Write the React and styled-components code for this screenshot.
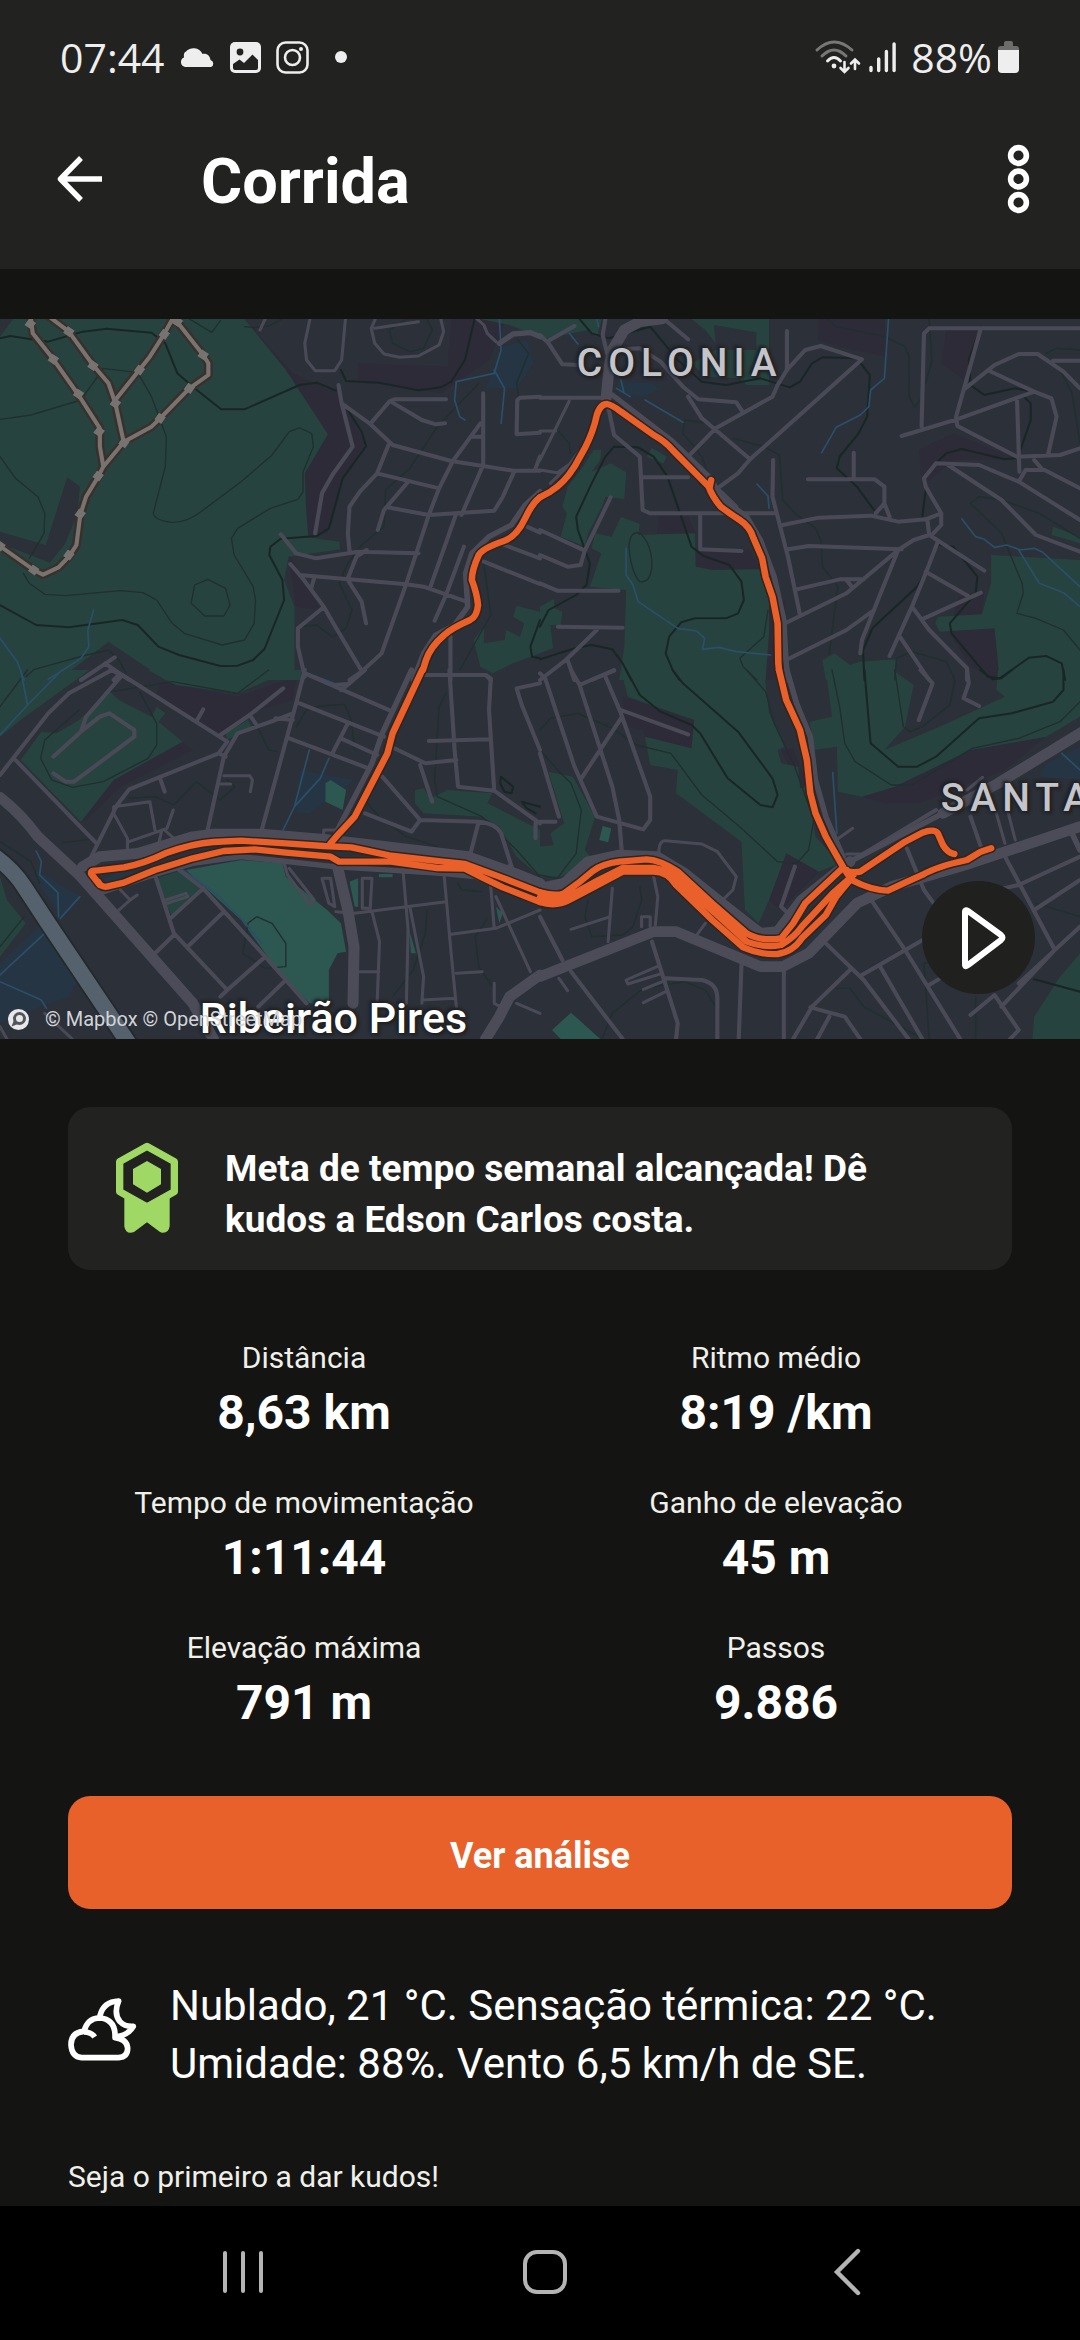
import React from "react";
import styled, { createGlobalStyle } from "styled-components";

const color = {
  page: "#141412",
  surface: "#222220",
  text: "#ffffff",
  muted: "#f0f0ea",
  status: "#eeeeee",
  accent: "#e8602a",
  goal: "#9fd865",
  nav: "#b4b4b4",
};

const GlobalStyle = createGlobalStyle`
  *, *::before, *::after { box-sizing: border-box; }
  body { margin: 0; background: ${color.page}; }
`;

const Screen = styled.div`
  display: flex;
  flex-direction: column;
  min-height: 100vh;
  overflow-x: hidden;
  background: ${color.page};
  color: ${color.text};
  font-family: Roboto, "Liberation Sans", sans-serif;
`;

const Header = styled.header`
  background: ${color.surface};
  padding-bottom: 25px;
`;

const StatusBar = styled.div`
  display: flex;
  align-items: center;
  justify-content: space-between;
  height: 114px;
  padding: 0 60px;
  color: ${color.status};
  font: 400 41px/48px "Open Sans", "Noto Sans", sans-serif;
`;

const StatusGroup = styled.div`
  display: flex;
  align-items: center;
  gap: ${(p) => p.$gap};
`;

const AppBar = styled.div`
  display: flex;
  align-items: center;
  height: 130px;
  padding: 0 50px 0 56px;
`;

const Title = styled.h1`
  flex: 1;
  margin: 0;
  padding: 6px 0 0 98px;
  font-size: 63px;
  line-height: 72px;
  font-weight: 700;
`;

const IconButton = styled.button`
  display: flex;
  align-items: center;
  justify-content: center;
  padding: 0;
  border: 0;
  background: none;
  color: inherit;
  cursor: pointer;
`;

const Icon = styled.svg`
  display: block;
  flex: none;
  overflow: visible;
`;

const Main = styled.main`
  flex: 1;
  padding-top: 50px;
`;

const MapFrame = styled.section`
  position: relative;
  aspect-ratio: 3 / 2;
  overflow: hidden;
  background: #2b3039;
`;

const MapDrawing = styled.svg`
  display: block;
  width: 100%;
  height: 100%;
`;

const MapLabel = styled.span`
  position: absolute;
  left: ${(p) => p.$x}%;
  top: ${(p) => p.$y}%;
  white-space: nowrap;
  color: ${(p) => (p.$town ? "#ffffff" : "#c4c5ca")};
  font-size: ${(p) => (p.$town ? 43 : 39)}px;
  line-height: 48px;
  font-weight: 500;
  letter-spacing: ${(p) => (p.$town ? "normal" : "6px")};
  text-shadow: 0 0 3px #222, 0 0 4px #222, 2px 2px 3px #222, -2px -2px 3px #222;
`;

const Attribution = styled.div`
  position: absolute;
  left: 7px;
  bottom: 6px;
  display: flex;
  align-items: center;
  gap: 15px;
  color: #d2d4d7;
  font-size: 20px;
  line-height: 28px;
`;

const PlayButton = styled(IconButton)`
  position: absolute;
  right: 45px;
  bottom: 45px;
  width: 113px;
  height: 113px;
  border-radius: 50%;
  background: #20201e;
`;

const Content = styled.div`
  display: flex;
  flex-direction: column;
  padding: 68px 68px 0;
`;

const GoalCard = styled.section`
  display: flex;
  align-items: center;
  gap: 46px;
  padding: 30px 47px 31px;
  border-radius: 22px;
  background: ${color.surface};
`;

const GoalText = styled.p`
  flex: 1;
  margin: 0;
  padding-top: 6px;
  margin-bottom: -6px;
  max-width: 680px;
  font-size: 37px;
  line-height: 51px;
  font-weight: 700;
`;

const Stats = styled.dl`
  display: grid;
  grid-template-columns: 1fr 1fr;
  row-gap: 41px;
  margin: 0;
  padding: 68px 0 64px;
  text-align: center;
`;

const StatLabel = styled.dt`
  color: ${color.muted};
  font-size: 30px;
  line-height: 40px;
`;

const StatValue = styled.dd`
  margin: 0;
  padding-top: 6px;
  font-size: 48px;
  line-height: 58px;
  font-weight: 700;
`;

const PrimaryButton = styled.button`
  width: 100%;
  height: 113px;
  border: 0;
  border-radius: 22px;
  background: ${color.accent};
  color: ${color.text};
  font: inherit;
  font-size: 36px;
  line-height: 48px;
  font-weight: 700;
  padding: 6px 0 0;
  cursor: pointer;
`;

const Weather = styled.section`
  display: flex;
  align-items: flex-start;
  gap: 32px;
  padding-top: 68px;
`;

const WeatherIcon = styled(Icon)`
  margin-top: 20px;
`;

const WeatherText = styled.p`
  flex: 1;
  margin: 0;
  max-width: 780px;
  font-size: 42px;
  line-height: 58px;
`;

const Kudos = styled.p`
  margin: 0;
  padding: 64px 0 9px;
  color: ${color.muted};
  font-size: 30px;
  line-height: 40px;
`;

const NavBar = styled.nav`
  display: grid;
  grid-template-columns: repeat(3, 1fr);
  height: 135px;
  padding: 0 82px 4px 92px;
  background: #000000;
  color: ${color.nav};
`;

/* The map is drawn in four tiles; each layer is painted over all tiles before the next. */
const tiles = [
  {
    origin: "translate(0 -19)",
    park:
      "M0 110 L38 57 H710 L830 210 L952 403 L885 520 L888 620 L895 712 L985 725 L988 748 L838 770 L825 840 L855 920 V1140 H480 L315 1025 L170 1140 H0 V730 L145 788 L190 730 L225 640 L232 560 L195 532 L133 735 L0 695Z" +
      "M1500 917 L1568 935 V1060 L1490 1090 L1430 1120 L1395 1100 L1375 1020 L1405 980 V1030 L1465 1020 L1470 990 L1510 1010 L1522 970 L1490 950Z M1395 57 H1568 V110 L1480 75Z",
    shade:
      "M710 57 L850 220 L980 280 L1060 430 L990 540 L950 700 L895 705 L885 520 L952 403 L830 210Z M1310 57 H1470 L1420 180 L1280 280 L1040 240 V190 L1300 200Z M838 770 L860 920 L930 930 L850 780Z",
    lake: "M1460 140 L1530 120 L1550 190 L1500 265 H1410Z",
    ridge:
      "M0 115 L30 108 L140 125 L240 95 L310 86 L440 98 L480 130 L515 220 L565 265 L642 328 H710 L870 255 L920 248 L975 272 M0 915 L105 975 L200 982 L355 960 L400 975 L460 1040 L520 1065 L640 1098 L690 1097 L735 1080 L768 1047 L825 900 L820 840 L782 765 L785 740 L815 716 L920 708 L955 685 L995 535 L1063 438 L1050 395 L1010 330 M1378 57 L1350 180 L1310 245 L1280 262 L1215 271 L1100 248 L1005 243 L990 210 M1568 960 L1540 1040 L1545 1070 L1568 1075",
    contour:
      "M0 358 L90 345 L235 300 L300 205 L400 218 L440 290 L483 410 L480 500 L445 640 Q450 662 500 667 Q545 668 590 630 L700 545 L790 465 L840 395 L870 384 L905 400 L910 440 L880 515 V575 L865 598 L785 625 L690 685 L672 715 L680 765 L735 860 L742 900 L738 970 L710 1020 L645 1035 L535 1000 L500 970 L455 900 L415 878 L350 872 L190 887 L130 883 L85 850 L68 820 M0 470 L45 535 L110 590 L130 640 L128 700 L85 775 M603 838 L655 865 L668 915 L650 948 H595 L555 910 L565 855Z M75 1130 L100 1108 L240 1068 L315 1050 L345 1080 L365 1118 M1390 250 L1270 380 L1190 505 L1120 570 L1115 680 L1050 735 L1010 790 L985 850 L1022 930 L1005 985 L965 1012 L920 975 L870 980 M1130 90 L1180 57 H1240 L1255 90 L1230 145 L1190 155 L1140 130Z M1500 115 L1535 160 L1500 250 L1505 290 M1405 790 L1425 945 L1335 1110 M550 57 L615 97 L640 62 M710 80 L740 83 L780 78 L820 57",
    river:
      "M1450 57 L1455 150 L1435 220 L1325 245 L1320 300 L1335 350 L1350 360 M1435 210 L1465 265 L1460 320 L1455 370 M272 930 L255 990 L258 1040 L235 1075 L140 1138 M0 1015 L50 1085 L70 1140",
    street:
      "M983 255 L992 310 L1024 440 L965 525 L935 580 L915 700 M992 310 L1075 372 L1140 435 L1310 483 L1490 512 H1568 M1075 372 L1130 305 L1145 298 H1295 M1135 305 L1225 360 L1265 373 L1292 370 M1128 435 L1095 520 L1045 575 L1015 620 L1010 700 L1015 755 M1095 520 L1275 565 M1185 545 L1115 630 L1097 690 M1125 622 L1245 645 L1435 632 L1460 590 L1493 515 M1403 280 V495 L1340 645 M1395 370 L1315 483 L1275 565 L1245 645 L1180 850 L1108 1060 L1050 1115 L1015 1140 M1370 410 H1395 M1325 640 L1250 860 M1568 290 L1510 293 L1502 300 L1500 403 L1568 398 M1568 470 L1555 505 M815 703 L860 760 L918 775 L1040 755 L1215 760 M1065 750 L1035 770 L1010 835 M843 792 L875 830 L940 920 L985 1000 L1050 1112 M870 825 L1180 853 L1230 860 L1355 905 M912 835 L903 868 M1010 840 L1050 905 L1063 970 M940 922 L865 985 V1040 L885 1130 M1347 740 L1295 885 L1262 962 M1530 680 L1568 698 M1465 735 L1568 775 M1405 785 L1568 852 M1308 1010 V1140 M1225 1125 H1410 L1425 1140 M235 1140 L333 1072 M305 1090 L375 1140 M345 1125 L330 1140",
    lane:
      "M900 57 L885 130 L890 180 L915 212 H972 L992 180 L1003 57 M1090 57 L1078 85 L1088 130 L1115 162 L1160 172 L1215 168 L1275 135 L1288 95 L1280 57 M1088 85 L1215 65 M770 57 L755 90 M1385 57 L1405 75 L1415 100 L1440 125",
    avenue:
      "M1568 575 L1525 615 L1485 675 L1420 710 L1370 760 L1352 820 L1358 920 L1320 975 L1265 1005 L1230 1060 L1200 1140 M1450 130 L1490 102 L1540 98 L1568 110",
    route:
      "M1568 592 Q1545 610 1525 655 Q1500 710 1465 722 Q1400 745 1390 765 Q1370 810 1370 840 Q1385 880 1388 915 Q1385 950 1365 960 Q1310 985 1290 1005 Q1250 1040 1237 1080 L1228 1110",
  },
  {
    origin: "translate(540 -19)",
    park:
      "M0 57 H180 L165 110 L140 90 L0 120Z M440 57 H665 V255 H600 L580 235 L480 230 L440 190 L510 150 H628 V97 L505 75 L510 130 L480 90Z M310 470 L325 443 L368 470 L358 490Z M155 450 H178 L175 480 L150 515 L205 490 L250 517 L245 597 L190 590 L180 620 L140 700 L130 740 L85 720 L60 710 L78 640 L65 620 L80 560 L125 500Z M235 650 L290 672 L285 705 L450 700 L452 800 L500 810 L640 808 L665 880 V1000 L655 1140 H230 L245 1040 L250 870 L145 860 L178 760 L150 745 L160 700 L208 710Z M0 920 L40 897 L42 925 L65 935 L60 975 H30 L38 1045 L0 1060Z M1310 765 L1568 780 V1140 H1335 L1320 985 L1160 995 L1148 970 L1155 950 L1283 943 L1310 850Z M1490 680 L1568 710 V730 L1485 705Z M820 1080 L855 1060 L900 1095 L930 1085 L1035 1078 L1030 1140 H830Z",
    shade:
      "M808 57 H1000 L1005 170 L870 140 L808 120Z M345 650 H430 L452 700 H340Z M452 745 L610 750 L640 808 H500 L452 800Z M1100 450 L1200 400 L1390 480 H1200 L1110 560Z M1180 85 L1270 90 L1230 240 L1165 190Z M1215 890 L1290 870 L1283 943 L1320 985 L1335 1140 L1250 1100 L1190 1000Z M665 900 L710 900 L715 1140 H655Z",
    lake: "M225 245 L330 250 L345 270 L300 290 L230 280Z",
    ridge:
      "M0 980 L25 930 L105 885 L135 855 L145 790 L110 690 L105 650 L150 550 L190 470 L215 440 L285 442 L330 470 L370 530 L440 740 L475 768 L550 795 L585 845 L592 900 L575 940 L540 955 H450 L410 967 L375 1010 L365 1060 L385 1110 L405 1140 M115 57 L150 100 L200 115 L320 80 L400 180 L470 245 L540 255 L640 235 L725 262 L755 245 L790 190 L820 172 L920 175 L958 225 L950 350 L925 400 L870 470 L862 505 L920 560 L970 630 M0 1078 L100 1045 L150 1035 L210 1048 L240 1090 L265 1140 M1110 650 L1120 570 M1150 490 L1180 460 L1225 447 L1350 478 L1380 475 M1395 450 L1425 360 V310 L1405 290 M1430 275 L1380 265 L1290 285 L1250 255 L1245 180 L1280 80 M1160 735 L1200 740 L1270 830 L1265 880 L1190 970 L1195 1000 L1300 1130 L1335 1135 L1420 1073 L1470 1068 L1515 1090 L1525 1140 M1120 820 L1095 860 L965 985 L938 1050 L942 1140",
    contour:
      "M835 57 L860 80 L1000 110 L1060 140 L1072 170 V290 L1088 322 L1110 290 M1130 57 L1138 180 L1120 250 M490 370 L420 360 L415 400 L470 470 L490 530 M560 415 L650 440 L695 465 L705 600 L740 640 L800 685 L815 720 L820 800 L865 860 L840 1060 M258 740 Q262 690 290 700 Q325 730 325 800 Q320 850 290 845 Q265 820 258 740Z M662 930 L650 1010 L580 1075 L590 1100 L630 1140 M1568 715 L1450 640 L1340 600 L1275 590 L1250 610 L1340 700 L1400 850 L1403 880 L1385 940 L1440 955 L1520 990 L1568 1050 M1470 160 L1500 145 L1568 150 M1510 210 L1545 280 L1568 430 M1030 1140 L1035 1075 L1080 1055 L1180 1085 L1205 1140 M55 395 L85 430 L88 460",
    river:
      "M1012 57 L1000 235 L960 270 L955 320 L930 345 L860 382 L818 458 M305 300 L415 367 M85 100 L110 132 M165 57 L170 80 M235 240 L243 275 M222 265 L262 290 M630 552 L662 588 L665 625 M250 745 V825 L270 855 L285 905 L400 985 L455 993 L478 1015 L472 1048 L520 1042 L570 1055 L670 1065 M1225 657 L1265 710 L1290 718 L1320 742 L1355 735 L1395 750 L1435 745 L1460 757 L1568 860 M1390 750 L1450 850 L1520 878 L1568 920",
    street:
      "M0 293 H180 M190 57 L182 105 L195 160 M205 150 L290 145 L350 185 L415 260 L460 298 L570 307 L590 338 M360 57 L430 118 M20 125 L100 78 M0 105 L25 130 L65 193 L120 195 M717 93 V210 L690 255 L675 290 L510 385 L430 470 M430 290 L470 355 L610 478 M570 620 L515 565 L575 520 L610 478 L935 178 L815 138 L770 150 L715 212 M200 330 L215 405 L290 470 L298 630 L320 640 H680 M298 532 H430 M465 640 V748 L585 753 M677 480 L675 590 L700 690 L720 770 L755 945 M705 675 L810 653 L960 647 L1040 665 L1120 658 L1165 640 L1120 560 L1115 535 L1150 490 L1275 495 L1390 545 L1568 660 M778 538 H972 L1000 560 V610 L975 640 M1000 610 L1015 650 M911 458 V530 M720 748 L780 738 L1050 748 M745 868 L870 838 H940 M715 968 L890 880 L1040 750 L1085 720 L1130 705 L1125 660 M890 840 L905 860 M1165 640 V675 L1135 708 L1290 812 M715 1080 L890 990 L970 930 M1040 750 L985 890 L935 1020 L930 1060 M1155 725 L1120 820 L1080 920 L1015 1068 M1120 815 L1243 888 M1280 878 L1115 955 M1080 920 L1130 990 L1240 1105 V1140 M1045 1010 L1130 1140 M1108 380 L1115 100 L1130 85 H1568 M1280 85 L1230 270 L1208 350 L1212 378 L1385 470 L1510 465 L1568 445 M1050 408 L1210 358 L1435 275 M1235 265 L1320 195 L1390 162 H1445 L1520 215 L1568 265 M1490 182 H1568 M1305 213 L1435 275 L1485 295 L1500 350 L1475 465 M1385 295 L1392 515 M1390 545 L1410 510 H1465 L1568 565 M1435 480 L1460 510 M1185 495 L1340 600 L1440 705 L1568 755 M0 690 L130 752 L205 592 M130 752 L118 795 L80 800 L0 765 M0 850 L50 872 H228 M52 980 L240 983 M165 990 L75 1080 L0 1140 M80 1080 L100 1140 M215 1112 L150 1140",
    lane: "M0 510 L50 518 L90 490 M85 303 L0 480 M0 393 H45 M175 320 L140 420 L80 500 L30 550",
    avenue:
      "M210 285 L380 420 L500 540 L520 590 L600 650 L640 720 L680 830 L708 960 L714 1080 L720 1140",
    trunk: "M355 57 L290 65 L245 90 L210 150 L200 210 L192 295",
    route:
      "M497 540 L492 565 M0 592 L30 575 Q70 550 100 500 L130 445 Q155 395 165 345 Q175 312 195 312 Q210 315 235 335 L330 405 Q365 425 385 450 L490 560 Q500 590 525 620 Q550 640 580 660 Q610 680 620 715 L645 775 L655 830 L675 890 L690 970 L692 1090 L694 1110",
  },
  {
    origin: "translate(0 351)",
    park:
      "M0 0 H260 L140 90 L60 150 L0 200Z M430 0 H875 V30 H780 L690 70 L510 45Z M320 65 L345 90 L440 140 L455 110 L480 130 L460 155 L530 215 L330 330 L235 455 L60 270 L120 185 L165 190 L230 150Z M655 190 L720 150 L730 170 L660 210Z M455 625 L530 600 L590 655 L500 740 L475 690Z M0 620 L20 690 L75 760 L0 860Z M1205 360 L1230 355 L1250 385 L1300 360 L1430 370 L1415 400 L1568 480 V620 L1500 560 L1450 470 L1400 440 L1230 430 L1205 400Z",
    garden:
      "M945 340 L960 330 L1005 360 L995 420 L945 395Z M540 600 L700 570 L820 580 L830 620 L950 720 L990 760 L1005 845 L980 850 L955 900 V1005 L900 1000 L820 920 L700 750Z M1015 635 L1040 625 V710 H1030Z M1188 780 L1208 850 H1193Z M1100 612 H1140 V622 H1100Z M1440 710 L1460 730 L1450 760Z",
    shade:
      "M470 35 L690 80 L830 30 H860 L850 90 L720 130 L640 190 L450 80Z M530 215 L560 240 L350 350 L250 450 L235 455 L330 330Z",
    lake:
      "M105 600 L235 680 L180 745 L110 640Z M0 880 L110 770 L160 780 L240 900 L200 980 L130 1005 L0 1060Z M870 300 L1030 330 L900 430 H860Z M300 625 L340 605 H400 L310 640Z",
    contour:
      "M0 110 L80 0 M325 65 L500 35 L690 70 L780 0 M405 65 L455 160 V225 L430 265 L300 335 L210 352 L150 330 L118 265 L130 210 L230 120 M375 385 L450 380 L505 405 L570 335 L640 390 L682 350 L660 330 M180 518 L260 508 M860 170 L890 120 L930 108 L1000 103 L1020 150 L1030 240 M1060 390 L1100 440 L1180 500 L1270 530 M745 165 L780 240 L805 245 M1295 70 L1275 110 L1262 330 L1270 380 L1400 440 L1500 540 L1568 620 M705 850 L720 760 L745 740 L790 760 L830 820 V890 L770 895 L705 850 M1240 720 L1235 790 L1200 900 L1140 980 M1415 745 L1380 800 L1390 890 L1430 950 M1330 640 L1340 660 L1400 665 M0 515 L90 575 L115 640 M0 830 L70 740",
    ridge: "M1455 320 L1490 350 L1485 370 L1465 365 L1452 340Z M1568 410 L1515 395 L1530 415 L1555 430",
    river:
      "M60 0 L80 105 L0 195 M80 105 L180 0 M105 543 L120 575 L115 615 L168 668 L170 740 M232 680 L175 745 M0 935 L120 990 L135 1015 M898 240 L855 410 L822 480 M955 265 L930 325 L855 410 M0 915 L130 790 M890 8 L970 40 M530 600 L620 665 L705 750 L760 820",
    street:
      "M325 0 L200 70 L140 130 L0 315 M355 15 L250 140 L235 185 L155 260 M235 185 L290 140 L318 130 L390 180 V200 L215 335 H190 L155 310 M320 0 L355 15 L660 215 L635 250 M590 118 L570 155 M640 195 L725 135 L822 55 M725 135 L745 165 M600 490 L605 470 L650 260 L690 190 L800 150 L850 130 M800 145 L850 150 M655 260 L635 250 L375 358 L340 405 L260 570 M465 325 L478 365 M45 270 L280 520 M885 0 L860 100 L760 480 M885 10 L1140 125 M870 100 L1115 200 M840 205 L1070 295 M1010 160 L965 250 M990 205 L1095 255 M1060 0 L1015 40 L990 60 M970 45 L1010 42 M1060 430 L1195 485 L1220 450 L1390 455 Q1440 460 1455 490 L1490 605 M1110 320 L1220 450 M1145 235 L1235 280 L1325 270 M1220 285 L1255 395 M1390 455 L1365 555 M1305 0 L1320 240 L1330 350 L1435 362 L1568 460 M1225 15 H1410 L1425 25 L1420 120 L1435 362 M1245 213 L1425 208 M1568 40 L1500 55 L1515 105 L1568 240 M1555 460 V505 M450 615 L505 790 L660 960 L640 980 M520 600 L590 655 L770 860 L890 1000 M590 655 L495 745 M650 725 L550 825 M505 795 L445 855 M770 860 L660 960 M825 935 L750 1010",
    lane:
      "M330 430 L330 410 L435 395 L450 480 M330 430 L370 505 V545 M375 515 L485 475 L503 420 M470 480 L460 525 M478 480 L510 510 M650 317 H725 L733 330 L727 365 M640 342 H670 M482 690 L540 670 L545 680 L485 700 M350 660 L378 690 L340 725 M378 690 L398 675 M825 580 L835 615 L900 705 L912 690 L840 595 M975 725 L1030 730 L1295 695 M935 625 H960 L972 710 L955 700Z M1052 625 H1080 L1075 715 H1052Z M1080 725 L1102 815 L1095 1000 M1040 905 H1100 M1170 600 L1185 780 L1180 1000 M1190 710 L1230 920 L1225 1000 M1290 620 L1310 850 L1325 1010 M1310 793 L1440 775 L1568 720 M1325 910 L1400 905 M1425 650 L1435 775 M1440 680 L1540 905 M1225 990 L1320 985 M1500 1000 L1568 1030 M1435 940 V1000 L1470 1020 M940 500 V480 H975 M130 1030 L210 1107 M0 1070 L20 1107",
    avenue:
      "M1195 0 L1110 190 L1080 280 L1020 400 L975 490 M300 665 L460 610 L560 580 L700 560 L970 590 L1280 610 L1380 620 L1568 702 M1480 590 L1460 600",
    trunk:
      "M0 382 Q60 430 110 500 L235 620 L560 1000 L620 1107 M240 590 L290 560 L400 550 L560 500 L620 492 H760 L940 508 L1120 530 L1360 560 L1500 612 L1568 640 M980 590 L1010 720 L1028 830 L1025 1000 M1568 915 L1480 980 L1450 1040 L1410 1107",
    highway: "M-20 555 Q40 600 70 650 L140 760 L380 1130",
    route:
      "M1226 0 L1190 80 L1140 190 L1125 250 L1090 320 L1030 440 L985 490 L960 520 M290 645 L265 612 Q262 600 280 602 L360 592 Q420 580 480 550 Q560 520 620 516 L700 512 L830 520 L940 528 L1020 532 L1130 556 L1280 574 L1350 582 L1450 620 L1568 667 M285 635 Q292 652 310 650 L360 638 L450 600 L560 565 L650 543 L740 538 L830 548 L960 560 L985 575 L1130 574 L1270 594 L1350 596 L1400 622 L1460 652 L1568 696",
  },
  {
    origin: "translate(540 351)",
    park:
      "M235 0 H650 L665 130 L710 230 L690 240 L700 280 L750 290 L755 355 L775 350 L800 500 L870 580 L810 605 L715 550 L665 690 L635 760 L595 720 L585 515 L395 370 L400 300 L320 285 L305 200 L440 235 L448 150 L255 80Z M830 0 H1025 L1085 45 L1060 170 L1000 240 L1160 170 L1350 80 L1325 60 L1330 0 H1568 V140 L1470 200 L1250 240 L1030 350 L935 380 L865 365 L862 230 L795 240 L783 155 L848 140Z M25 305 L95 320 L160 440 L130 540 L155 570 L60 620 H0 V530 L40 525 L30 490 L70 460Z M1568 850 V1107 H1430 L1435 1040 L1510 920Z",
    garden: "M182 468 L207 475 L198 517 L172 510Z M90 1028 L175 1107 H60 L35 1080Z",
    shade:
      "M240 80 L448 150 L440 235 L305 200 L300 180 L250 170Z M700 240 L735 235 L775 340 L755 355Z M665 690 L715 550 L810 605 L700 720Z M935 380 L1030 350 L1250 240 L1470 200 L1350 300 L1100 400 H1000Z",
    lake: "M1470 280 L1568 230 V330 L1450 320Z",
    ridge:
      "M250 0 L290 75 L350 125 L440 165 L465 190 L545 325 L640 405 L675 412 L690 375 L675 325 L575 185 L415 40 L385 0 M942 0 L960 220 L1040 290 H1095 L1150 260 L1275 145 L1370 130 L1490 95 L1520 60 V0 M1278 0 L1315 28 L1340 25 L1370 0 M1435 928 L1568 965",
    contour:
      "M600 0 L655 65 L680 160 L740 290 L795 450 L780 540 L745 580 L690 575 L580 470 L470 375 L380 250 L280 225 L210 175 L110 130 L30 145 L0 180 M0 240 L60 310 L90 340 L120 420 L105 550 L50 625 L0 615 M848 0 L870 110 L885 220 L915 275 L1020 345 H1080 L1255 235 L1390 205 L1510 155 L1568 95 M1030 0 L1055 170 L1075 185 L1110 170 L1190 105 L1205 30 M290 650 L295 690 L270 770 L240 795 L150 800 L130 740 L140 690 M180 1107 L210 1030 L300 955 L420 935 L480 960 L510 1010 M860 955 H900 L940 1010 L1100 1100 M1130 1107 L1115 880 L1200 860 M1265 980 V1107 M1440 700 L1568 740",
    river: "M850 308 L862 490 M1515 250 L1568 300",
    street:
      "M0 10 L15 25 L100 290 L165 440 L300 478 L320 450 V380 L235 130 L190 20 M90 0 L115 45 L210 350 L230 450 L238 550 M115 45 L215 0 M235 120 L430 193 M235 145 L120 325 M0 250 L55 440 M0 455 H45 M740 590 L700 710 L720 730 M90 905 L240 1107 M0 740 L65 870 M325 815 L400 1060 L395 1107 M365 925 L470 930 Q515 940 515 985 V1107 M585 885 L577 1107 M708 900 V1107 M735 1107 L790 1010 L900 900 M785 1012 L885 1040 L930 1107 M840 1040 L805 1107 M830 820 L940 930 L1070 1107 M965 695 L1060 840 L1220 1107 M935 915 L1120 805 M985 885 L1110 1107 M1065 535 L1115 660 L1150 710 M1340 540 L1495 840 L1340 1010 M1250 440 L1280 530 M1345 655 L1390 645 L1568 560 M1435 720 L1568 630 M1130 945 L1170 920 M1250 1035 L1320 975 L1390 1080 L1365 1107 M1390 940 L1568 770 M1105 0 L1140 40 L1100 150 M1240 0 L1245 40 L1230 85 L1275 108 M925 560 L1150 420",
    lane:
      "M345 550 Q345 510 365 512 L470 522 L515 545 L570 620 L560 660 L535 685 M480 760 L455 795 M210 655 L198 815 M330 620 L342 680 L335 765 M90 778 L198 742 M55 925 L80 962 M340 890 L250 930 L255 942 L355 910 M300 958 L355 935 M300 998 L365 965 M295 770 V740 H320 V770 M1325 430 L1350 520 M1360 430 L1380 510 M860 510 L908 475 M1240 360 L1285 322 M890 552 H930",
    avenue:
      "M717 0 L745 100 L785 200 L800 330 L830 440 L880 560 M900 575 L1170 430 L1330 340 L1530 220 L1568 180 M1540 480 L1568 540",
    trunk:
      "M0 920 L330 785 H395 L640 890 H705 L780 850 L920 700 L1020 650 L1250 580 L1568 470 M0 655 L70 640 L140 575 L230 555 L340 560 L420 610 L540 710 L640 790 L690 785 L760 690 L900 575 M1170 430 L1330 340 L1568 190",
    route:
      "M0 667 Q45 680 70 670 L110 640 L155 602 Q180 582 230 575 L310 568 Q350 570 400 605 L500 700 L600 790 Q640 815 700 805 L735 760 L770 700 L875 598 L890 600 M0 696 Q45 712 85 690 L150 655 L240 605 H330 Q370 605 395 645 L500 750 L590 832 Q640 855 690 852 Q735 845 760 805 L830 735 L860 680 L900 630 M0 682 Q60 692 100 670 L170 630 L240 594 L330 594 Q380 602 405 634 L520 740 L600 815 Q650 835 700 825 Q740 800 760 770 L850 670 L910 615 M694 0 L715 90 L755 180 L775 270 L785 370 L800 430 L830 500 L885 600 Q905 610 930 605 L1060 515 L1110 488 Q1145 475 1155 490 L1170 525 Q1185 550 1203 552 M885 600 L905 630 Q960 660 1010 662 L1060 638 L1110 615 Q1150 590 1240 570 L1280 545 L1310 535",
  },
];

const railway =
  "M88 40 L95 100 L155 178 L228 285 L290 385 V440 L300 500 M130 40 L200 95 L270 195 L315 250 L335 310 L360 430 M510 40 L475 105 L435 170 L335 300 M495 40 L590 165 L605 190 V225 L550 265 L465 355 L440 380 L360 425 L300 500 L285 530 L250 590 L233 645 L222 735 L200 770 L170 802 L125 824 L98 810 L0 738";

const sleepers = [
  [88, 72], [200, 95], [155, 178], [270, 197], [228, 282], [477, 103], [405, 210],
  [590, 165], [550, 265], [465, 355], [335, 310], [288, 395], [360, 428], [285, 528],
  [233, 642], [200, 765], [98, 810], [515, 65], [0, 738],
];

const layers = [
  { key: "shade", fill: "#2d2b38" },
  { key: "lake", fill: "#253543" },
  { key: "park", fill: "#274340" },
  { key: "garden", fill: "#2d5751" },
  { key: "contour", stroke: "#1f302e", width: 4 },
  { key: "ridge", stroke: "#182725", width: 6 },
  { key: "river", stroke: "#2a4f68", width: 5 },
  { key: "lane", stroke: "#4a4a57", width: 9 },
  { key: "street", stroke: "#4a4a57", width: 12 },
  { key: "avenue", stroke: "#4c4c59", width: 16 },
  { key: "trunk", stroke: "#4c4c59", width: 32 },
  { key: "highway", stroke: "#23282b", width: 56 },
  { key: "highway", stroke: "#55616c", width: 46 },
  { key: "route", stroke: "#33241c", width: 28 },
  { key: "route", stroke: "#ea602b", width: 19 },
];

const tileScale = "scale(0.34439 0.33333)";

function RouteMap() {
  return (
    <MapDrawing viewBox="0 0 1080 720" preserveAspectRatio="xMidYMid slice" role="img" aria-label="Mapa do percurso">
      {layers.map((layer, i) => (
        <g
          key={i}
          fill={layer.fill || "none"}
          stroke={layer.stroke || "none"}
          strokeWidth={layer.width}
          strokeLinecap="round"
          strokeLinejoin="round"
        >
          {tiles.map((tile) =>
            tile[layer.key] ? (
              <path key={tile.origin} d={tile[layer.key]} transform={`${tile.origin} ${tileScale}`} />
            ) : null
          )}
        </g>
      ))}
      <g transform={`${tiles[0].origin} ${tileScale}`} fill="none" strokeLinejoin="round">
        <path d={railway} stroke="#3b2f2a" strokeWidth="26" />
        <path d={railway} stroke="#777370" strokeWidth="12" />
        {sleepers.map(([x, y]) => (
          <rect key={`${x}-${y}`} x={x - 12} y={y - 12} width="24" height="24" fill="#777370" transform={`rotate(35 ${x} ${y})`} />
        ))}
      </g>
    </MapDrawing>
  );
}

const stats = [
  ["Distância", "8,63 km"],
  ["Ritmo médio", "8:19 /km"],
  ["Tempo de movimentação", "1:11:44"],
  ["Ganho de elevação", "45 m"],
  ["Elevação máxima", "791 m"],
  ["Passos", "9.886"],
];

export default function App() {
  return (
    <Screen>
      <GlobalStyle />
      <Header>
        <StatusBar>
          <StatusGroup $gap="15px">
            <span>07:44</span>
            <Icon width="35" height="20" viewBox="0 0 35 20" fill="currentColor" aria-hidden="true">
              <path d="M5 20 A5 5 0 0 1 4 10.500 C3.500 6 5 5 5.500 5 A10 10 0 0 1 22.500 7 C27 6 30 9 30.500 13 A3.700 3.700 0 0 1 31 20Z" />
            </Icon>
            <Icon width="31" height="31" viewBox="0 0 31 31" aria-hidden="true">
              <rect width="31" height="31" rx="5" fill="currentColor" />
              <circle cx="10" cy="10" r="3.400" fill={color.surface} />
              <path d="M3 22 L9.500 17.500 L14 21 L22.500 12.500 L28 18 V26 Q28 28 26 28 H5 Q3 28 3 26Z" fill={color.surface} />
            </Icon>
            <Icon width="33" height="33" viewBox="0 0 33 33" fill="none" stroke="currentColor" strokeWidth="2.600" aria-hidden="true">
              <rect x="1.500" y="1.500" width="30" height="30" rx="8" />
              <circle cx="16.500" cy="16.500" r="7.500" />
              <circle cx="25" cy="8" r="2" fill="currentColor" stroke="none" />
            </Icon>
            <Icon width="44" height="12" viewBox="0 0 44 12" fill="currentColor" aria-hidden="true">
              <circle cx="17" cy="6" r="6" />
            </Icon>
          </StatusGroup>
          <StatusGroup $gap="14px">
            <StatusGroup $gap="8px">
              <Icon width="46" height="34" viewBox="0 0 46 34" fill="none" strokeWidth="3" strokeLinecap="round" aria-hidden="true">
                <path d="M2 10 Q19 -6 37 10 M7 16 Q19 4 31 16" stroke="#777775" />
                <path d="M12.500 21 Q19 14 25.500 21" stroke="currentColor" />
                <circle cx="19" cy="26" r="2.400" fill="currentColor" />
                <path d="M29.500 22 V31 M25.500 28 L29.500 32 L33.500 28 M40 29 V20 M36 23.500 L40 19.500 L44 23.500" stroke="currentColor" strokeWidth="2.600" />
              </Icon>
              <Icon width="28" height="32" viewBox="0 0 28 32" stroke="currentColor" strokeWidth="3.400" strokeLinecap="round" aria-hidden="true">
                <path d="M2 26.500 V29.500 M9.700 18 V29.500 M17.400 10.500 V29.500 M25.100 3 V29.500" />
              </Icon>
            </StatusGroup>
            <StatusGroup $gap="6px">
              <span>88%</span>
              <Icon width="22" height="32" viewBox="0 0 22 32" aria-hidden="true">
                <path d="M6 5 V2 Q6 0 8 0 H13 Q15 0 15 2 V5 H18 Q21 5 21 8 V10 H0 V8 Q0 5 3 5Z" fill="#6c6c6a" />
                <path d="M0 9 H21 V28 Q21 32 17 32 H4 Q0 32 0 28Z" fill="currentColor" />
              </Icon>
            </StatusGroup>
          </StatusGroup>
        </StatusBar>
        <AppBar>
          <IconButton type="button" aria-label="Voltar">
            <Icon width="47" height="46" viewBox="0 0 47 46" fill="none" stroke="currentColor" strokeWidth="5.500">
              <path d="M25 2 L4.500 23 L25 44 M5 23 H46" strokeLinejoin="round" />
            </Icon>
          </IconButton>
          <Title>Corrida</Title>
          <IconButton type="button" aria-label="Mais opções">
            <Icon width="23" height="70" viewBox="0 0 23 70" fill="none" stroke="currentColor" strokeWidth="5.600">
              <circle cx="11.500" cy="11.500" r="7.900" />
              <circle cx="11.500" cy="35" r="7.900" />
              <circle cx="11.500" cy="58.500" r="7.900" />
            </Icon>
          </IconButton>
        </AppBar>
      </Header>

      <Main>
        <MapFrame>
          <RouteMap />
          <MapLabel $x={53.4} $y={2.8}>COLONIA</MapLabel>
          <MapLabel $x={87.1} $y={63.2}>SANTA</MapLabel>
          <MapLabel $town $x={18.5} $y={93.8}>Ribeirão Pires</MapLabel>
          <Attribution>
            <Icon width="23" height="23" viewBox="0 0 23 23" aria-hidden="true">
              <circle cx="11.500" cy="11.500" r="10.500" fill="#e8e8e8" />
              <circle cx="12.500" cy="10.500" r="5" fill="none" stroke="#50565c" strokeWidth="3" />
              <path d="M4.500 18.500 L7 12 L11 16Z" fill="#50565c" />
            </Icon>
            <span>© Mapbox © OpenStreetMap</span>
          </Attribution>
          <PlayButton type="button" aria-label="Reproduzir percurso">
            <Icon width="113" height="113" viewBox="0 0 113 113" fill="none" stroke="#ffffff" strokeWidth="6" strokeLinejoin="round">
              <path d="M43 31 Q43 28 46 30 L79 54 Q82 56.500 79 59 L46 84 Q43 87 43 83Z" />
            </Icon>
          </PlayButton>
        </MapFrame>

        <Content>
          <GoalCard>
            <Icon width="64" height="92" viewBox="45 36 192 276" aria-hidden="true">
              <path d="M73 190 H209 V288 Q206 310 186 308 L180 306 L141 277 L102 306 Q78 314 73 290Z" fill={color.goal} />
              <path d="M141 49 L223 95 V185 L141 231 L59 185 V95Z" fill={color.surface} stroke={color.goal} strokeWidth="22" strokeLinejoin="round" />
              <path d="M141 93 L183 117 V163 L141 188 L99 163 V117Z" fill={color.goal} />
            </Icon>
            <GoalText>Meta de tempo semanal alcançada! Dê kudos a Edson Carlos costa.</GoalText>
          </GoalCard>

          <Stats>
            {stats.map(([label, value]) => (
              <div key={label}>
                <StatLabel>{label}</StatLabel>
                <StatValue>{value}</StatValue>
              </div>
            ))}
          </Stats>

          <PrimaryButton type="button">Ver análise</PrimaryButton>

          <Weather>
            <WeatherIcon width="70" height="65" viewBox="24 50 210 195" fill="none" stroke="#ffffff" strokeWidth="17" strokeLinejoin="round" strokeLinecap="round" aria-hidden="true">
              <path d="M65 232 H176 Q203 230 203 203 Q200 176 165 172 Q168 116 118 113 Q82 114 72 153 Q33 156 33 193 Q35 230 65 232Z" />
              <path d="M72 155 Q94 155 104 170" strokeLinecap="butt" />
              <path d="M120 106 Q130 64 176 62 Q160 100 180 124 Q195 140 220 138 Q206 162 176 168" />
            </WeatherIcon>
            <WeatherText>
              Nublado, 21 °C. Sensação térmica: 22 °C. Umidade: 88%. Vento 6,5 km/h de SE.
            </WeatherText>
          </Weather>

          <Kudos>Seja o primeiro a dar kudos!</Kudos>
        </Content>
      </Main>

      <NavBar>
        <IconButton type="button" aria-label="Recentes">
          <Icon width="42" height="44" viewBox="0 0 42 44" stroke="currentColor" strokeWidth="4" strokeLinecap="round">
            <path d="M3 3 V41 M21 3 V41 M39 3 V41" />
          </Icon>
        </IconButton>
        <IconButton type="button" aria-label="Início">
          <Icon width="46" height="46" viewBox="0 0 46 46" fill="none" stroke="currentColor" strokeWidth="4">
            <rect x="3" y="3" width="40" height="40" rx="12" />
          </Icon>
        </IconButton>
        <IconButton type="button" aria-label="Voltar uma tela">
          <Icon width="26" height="46" viewBox="0 0 26 46" fill="none" stroke="currentColor" strokeWidth="4.400" strokeLinecap="round">
            <path d="M24 2 L3 23 L24 44" />
          </Icon>
        </IconButton>
      </NavBar>
    </Screen>
  );
}
